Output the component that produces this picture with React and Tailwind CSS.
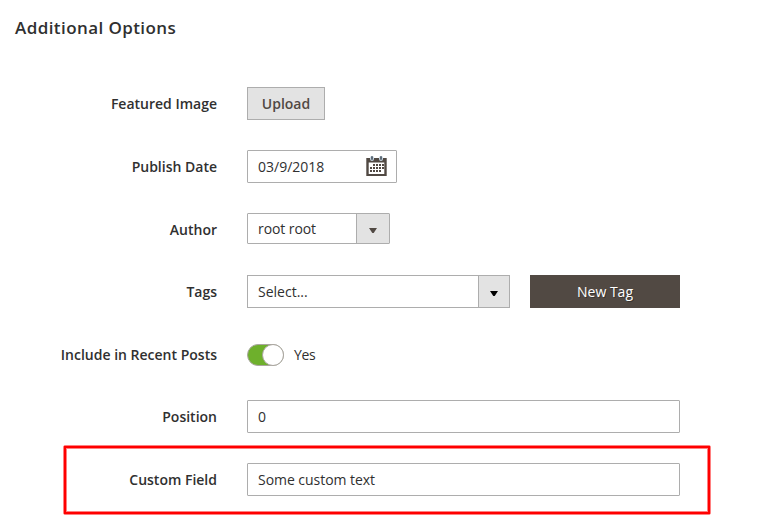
import React from "react";

function Row({ label, className = "h-[33px] mb-[30px]", labelClassName = "", children }) {
  return (
    <div className={`relative flex items-center ${className}`}>
      <label className={`w-[217px] mr-[30px] shrink-0 text-right font-semibold ${labelClassName}`}>{label}</label>
      {children}
    </div>
  );
}

function TextField({ value }) {
  return (
    <div className="flex h-[33px] w-[433px] items-center rounded-[1px] border border-[#adadad] bg-white px-[10px] tracking-[-0.04px]">
      {value}
    </div>
  );
}

function Caret({ color }) {
  return (
    <svg width="8" height="5" viewBox="0 0 8 5" fill={color}>
      <path d="M0 0h8L4.700 5H3.300z" />
    </svg>
  );
}

function CalendarIcon() {
  return (
    <svg width="21" height="21" viewBox="0 0 21 21" fill="#514943">
      <path fillRule="evenodd" d="M.3 2h20.400v18H.3zM2.700 6.500v11.500h15.600V6.500z" />
      <rect x="4" y="0" width="4" height="5" rx="2" fill="#c4d3df" />
      <rect x="13" y="0" width="4" height="5" rx="2" fill="#c4d3df" />
      <rect x="5" y="0" width="2" height="4" rx="1" fill="#5f6c78" />
      <rect x="14" y="0" width="2" height="4" rx="1" fill="#5f6c78" />
      <path d="M7 8h2v2H7zM10 8h2v2h-2zM13 8h2v2h-2zM16 8h2v2h-2zM4 11h2v2H4zM7 11h2v2H7zM10 11h2v2h-2zM13 11h2v2h-2zM16 11h2v2h-2zM4 14h2v2H4zM7 14h2v2H7zM10 14h2v2h-2zM13 14h2v2h-2z" />
    </svg>
  );
}

export default function App() {
  return (
    <main className="h-[526px] w-[771px] overflow-hidden bg-white pt-[16px] font-['Open_Sans',sans-serif] text-[14px] leading-[19px] text-[#303030]">
      <h2 className="mb-[47px] ml-[15px] h-6 text-[17px] font-semibold leading-6 tracking-[0.42px]">
        Additional Options
      </h2>

      <Row label="Featured Image">
        <button className="h-[33px] w-[78px] border border-[#adadad] bg-[#e3e3e3] font-semibold text-[#514943]">
          Upload
        </button>
      </Row>

      <Row label="Publish Date">
        <div className="flex h-[33px] w-[150px] items-center justify-between rounded-[1px] border border-[#adadad] pl-[10px] pr-[9px]">
          <span>03/9/2018</span>
          <CalendarIcon />
        </div>
      </Row>

      <Row label="Author" className="mb-[31px] h-[31px]" labelClassName="pt-[2px]">
        <div className="flex h-[31px] w-[143px] rounded-[1px] border border-[#adadad]">
          <span className="flex flex-1 items-center pl-[10px] tracking-[-0.08px]">root root</span>
          <span className="flex w-[33px] items-center justify-center border-l border-[#adadad] bg-[#e3e3e3] pt-[3px]">
            <Caret color="#514943" />
          </span>
        </div>
      </Row>

      <Row label="Tags">
        <div className="flex h-[33px] w-[263px] border border-[#adadad]">
          <span className="flex flex-1 items-center pl-[10px]">Select...</span>
          <span className="flex w-[31px] items-center justify-center border-l border-[#adadad] bg-[#e3e3e3] pt-[4px]">
            <Caret color="#000" />
          </span>
        </div>
        <button className="ml-5 h-[33px] w-[150px] bg-[#514943] font-medium text-white [text-shadow:1px_1px_0_rgba(0,0,0,0.3)]">
          New Tag
        </button>
      </Row>

      <Row label="Include in Recent Posts" className="mb-[29px] h-[33px]">
        <div className="flex h-[22px] w-[37px] justify-end rounded-full border border-[#aaa6a0] bg-[#6eb02c]">
          <span className="-my-px -mr-px h-[22px] w-[22px] rounded-full border border-[#aaa6a0] bg-white" />
        </div>
        <span className="ml-[10px] tracking-[-0.3px]">Yes</span>
      </Row>

      <Row label="Position">
        <TextField value="0" />
      </Row>

      <Row label="Custom Field" className="h-[33px]">
        <TextField value="Some custom text" />
        <div className="absolute -top-[18px] left-[63px] h-[70px] w-[648px] rounded-[2px] border border-[#ff8080]">
          <div className="h-full w-full border-2 border-[#ff0000]">
            <div className="h-full w-full border border-[#ff8080]" />
          </div>
        </div>
      </Row>
    </main>
  );
}
